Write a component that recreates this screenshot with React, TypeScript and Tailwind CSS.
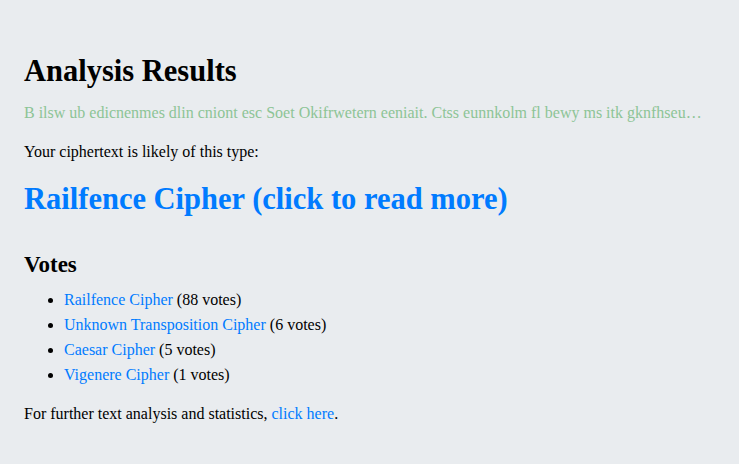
const votes = [
    { name: "Railfence Cipher", count: 88 },
    { name: "Unknown Transposition Cipher", count: 6 },
    { name: "Caesar Cipher", count: 5 },
    { name: "Vigenere Cipher", count: 1 },
];

function App() {
    return (
        <div className="min-h-[464px] bg-[#e9ecef] px-6 pt-[52px] text-black" style={{ fontFamily: '"Liberation Serif", serif' }}>
            <h2 className="text-[30.5px] font-bold leading-[38px]">Analysis Results</h2>
            <p className="mt-[11px] text-[16px] leading-6 text-[#8dc496] whitespace-nowrap overflow-hidden text-ellipsis">
                B ilsw ub edicnenmes dlin cniont esc Soet Okifrwetern eeniait. Ctss eunnkolm fl bewy ms itk gknfhseu…
            </p>
            <p className="mt-[15px] text-[16px] leading-6">Your ciphertext is likely of this type:</p>
            <h1 className="mt-[15px] text-[30.5px] font-bold leading-[40px]">
                <a href="#" className="text-[#007bff]">Railfence Cipher (click to read more)</a>
            </h1>
            <h3 className="mt-[31px] text-[23px] font-bold leading-[30px]">Votes</h3>
            <ul className="mt-[7px] list-disc pl-10 text-[16px]">
                {votes.map((v) => (
                    <li key={v.name} className="leading-[25px]">
                        <a href="#" className="text-[#007bff]">{v.name}</a> ({v.count} votes)
                    </li>
                ))}
            </ul>
            <p className="mt-[15px] text-[16px] leading-6">
                For further text analysis and statistics, <a href="#" className="text-[#007bff]">click here</a>.
            </p>
        </div>
    );
}

export default App;
